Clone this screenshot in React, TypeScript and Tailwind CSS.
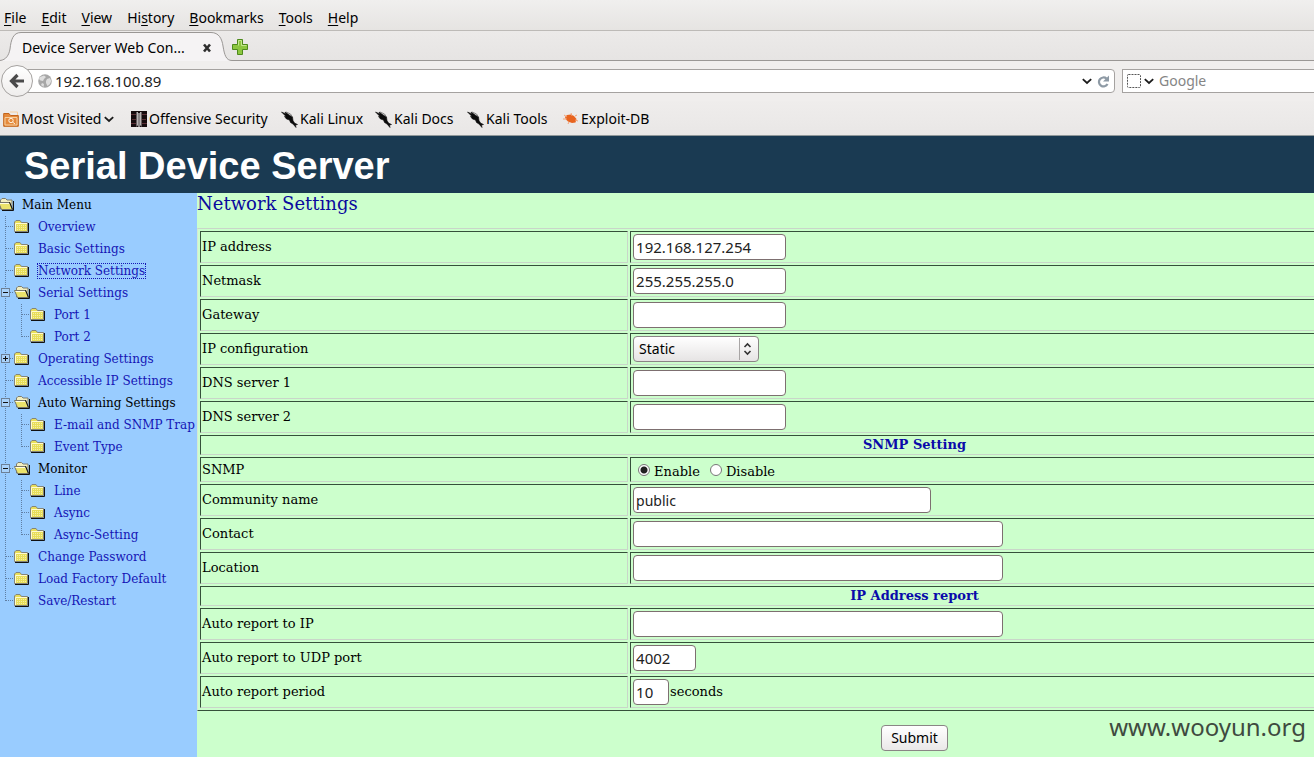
import type { ReactNode } from "react";

const ui = "font-['Noto_Sans',sans-serif]";

/* ---------- browser chrome ---------- */

const menus: [string, string, string][] = [
  ["", "F", "ile"],
  ["", "E", "dit"],
  ["", "V", "iew"],
  ["Hi", "s", "tory"],
  ["", "B", "ookmarks"],
  ["", "T", "ools"],
  ["", "H", "elp"],
];

function MenuBar() {
  return (
    <nav className="flex h-[30px] items-center gap-[15px] bg-gradient-to-b from-[#f0efee] to-[#e6e4e2] px-1 pt-[5px] text-sm leading-5">
      {menus.map(([a, b, c]) => (
        <button key={a + b + c} type="button">
          {a}
          <span className="underline underline-offset-2">{b}</span>
          {c}
        </button>
      ))}
    </nav>
  );
}

function TabStrip() {
  return (
    <div className="flex h-[31px] items-start border-t border-[#bdbab7] bg-gradient-to-b from-[#eceae9] to-[#e6e4e3]">
      <div className="relative h-[30px] w-[232px] shrink-0">
        <svg className="absolute inset-0" width="232" height="30" viewBox="0 0 232 30">
          <path d="M0 29.5C6 29 9 24 10 18C11 9 13 1.500 21 1.500H211C219 1.500 222 8 223 15C224.500 24 226 29.500 232 29.500V30H0Z" fill="#f5f3f4" />
          <path d="M0 29.5C6 29 9 24 10 18C11 9 13 1.500 21 1.500H211C219 1.500 222 8 223 15C224.500 24 226 29.500 232 29.500" fill="none" stroke="#9a9795" />
        </svg>
        <div className="relative flex h-full items-center justify-between pt-1 pr-5 pl-[22px] text-sm">
          <span className="whitespace-nowrap">Device Server Web Con...</span>
          <button type="button" aria-label="Close tab">
            <svg width="10" height="10" viewBox="0 0 10 10">
              <path d="M2 1.500L8 8.500M8 1.500L2 8.500" stroke="#2e2e2e" strokeWidth="2.600" />
            </svg>
          </button>
        </div>
      </div>
      <div className="flex h-[30px] flex-1 items-center border-b border-[#9a9795]">
        <button type="button" aria-label="New tab" className="pt-[2px]">
          <svg width="16" height="16" viewBox="0 0 16 16">
            <path d="M5.500 .5H10.500V5.500H15.500V10.500H10.500V15.500H5.500V10.500H.5V5.500H5.500Z" fill="#8cc63f" stroke="#4e8a1c" />
            <path d="M6.500 6.500V1.500H9.500V6.500H14.500" fill="none" stroke="#c3e68d" />
          </svg>
        </button>
      </div>
    </div>
  );
}

function Chevron() {
  return (
    <svg width="10" height="7" viewBox="0 0 10 7" className="shrink-0">
      <path d="M.8 1.200L5 5L9.200 1.200" fill="none" stroke="#1b1b1b" strokeWidth="1.800" />
    </svg>
  );
}

function NavBar() {
  return (
    <div className="flex h-10 items-center bg-[#f0eeed]">
      <button
        type="button"
        aria-label="Back"
        className="z-10 ml-[1px] flex size-8 shrink-0 items-center justify-center rounded-full border border-[#a5a2a0] bg-gradient-to-b from-white to-[#efedec]"
      >
        <svg width="16" height="16" viewBox="0 0 16 16">
          <path d="M8.500 2L2.500 8L8.500 14M3 8H15" fill="none" stroke="#4a4a4a" strokeWidth="3.200" />
        </svg>
      </button>
      <div className="-ml-2 flex h-6 w-[1090px] min-w-0 items-center rounded-r-sm border border-[#a5a2a0] bg-white pr-1 pl-3">
        <svg width="14" height="14" viewBox="0 0 14 14" className="shrink-0">
          <circle cx="7" cy="7" r="6.800" fill="#a7a7a7" />
          <path d="M2 3L6 1.500L8 3L6 5L5 7L2.500 6.500L1 5ZM9 5L12 4L13.300 7L12 10L9.500 12L8 9L8 7ZM4 9L6 10L5.500 13L3 11Z" fill="#dedede" />
        </svg>
        <input
          aria-label="Address"
          defaultValue="192.168.100.89"
          className="ml-[3px] min-w-0 flex-1 bg-transparent text-[15px] leading-5 text-[#222] outline-none"
        />
        <button type="button" aria-label="Show history">
          <Chevron />
        </button>
        <button type="button" aria-label="Reload" className="ml-[5px]">
          <svg width="13" height="13" viewBox="0 0 13 13">
            <path d="M9.500 3.600A4.500 4.500 0 1 0 10.500 9" fill="none" stroke="#8e9aa5" strokeWidth="2.200" />
            <path d="M12 .5V6.500H6Z" fill="#8e9aa5" />
          </svg>
        </button>
      </div>
      <div className="ml-[7px] flex h-6 min-w-[192px] flex-1 items-center border border-r-0 border-[#a5a2a0] bg-white pl-1">
        <svg width="14" height="14" viewBox="0 0 14 14" className="shrink-0">
          <rect x=".5" y=".5" width="13" height="13" rx="1" fill="none" stroke="#555" strokeDasharray="2 1" />
        </svg>
        <button type="button" aria-label="Choose search engine" className="ml-[3px]">
          <Chevron />
        </button>
        <input
          aria-label="Search"
          placeholder="Google"
          className="ml-[5px] w-full min-w-0 bg-transparent text-sm leading-5 outline-none placeholder:text-[#858585]"
        />
      </div>
    </div>
  );
}

function KaliIcon() {
  return (
    <svg width="17" height="17" viewBox="0 0 17 17" className="mr-[1px] shrink-0">
      <path d="M.5 1L5 3L4 1L9 4.500L11.500 6L12 9.500L13.500 12L16.500 13.500L14.500 14L15 16.500L12 13L9.500 11.500L8.500 9L5.500 8L3.500 5.500L5 5.500Z" fill="#0b0b0b" stroke="#0b0b0b" strokeWidth=".6" />
      <path d="M5 1L9.500 3L11.500 6" fill="none" stroke="#555" strokeWidth=".7" />
    </svg>
  );
}

function Bookmarks() {
  const item = "flex items-center gap-[1px] whitespace-nowrap";
  return (
    <nav className="flex h-[34px] items-center bg-gradient-to-b from-[#efedec] to-[#e9e7e6] pt-[2px] pl-[3px] text-sm leading-5">
      <button type="button" className={item + " w-[113px]"}>
        <svg width="16" height="16" viewBox="0 0 16 16" className="mr-[1px] shrink-0">
          <path d="M.7 2.500H6L7.500 4.500H15.300V15.300H.7Z" fill="#e58a3c" stroke="#c4641a" />
          <path d="M7 1H14.500V4M2 6.500H14V14H2Z" fill="none" stroke="#f6cf9f" />
          <circle cx="8" cy="9.500" r="2.200" fill="none" stroke="#fff3df" />
          <path d="M9.500 11L12 13" stroke="#fff3df" />
        </svg>
        <span className="mr-[2px]">Most Visited</span>
        <Chevron />
      </button>
      <a href="#offsec" className={item + " ml-[15px] w-[140px]"}>
        <svg width="16" height="16" viewBox="0 0 16 16" className="mr-[1px] shrink-0">
          <path fill="#170c0e" d="M0 0H16V16H0Z" />
          <path stroke="#5b3036" d="M0 3.500H5M1 8.500H5M0 12.500H5M11 3.500H16M11 8.500H15M11 12.500H16" />
          <path fill="#b9b4b4" d="M5.500 1H7V14L5.500 16ZM9 1H10.500V16L9 14Z" />
          <path fill="#fff" d="M7.500 2H8.500V16H7.500Z" />
        </svg>
        Offensive Security
      </a>
      <a href="#linux" className={item + " ml-[10px] w-[84px]"}>
        <KaliIcon />
        Kali Linux
      </a>
      <a href="#docs" className={item + " ml-[10px] w-[82px]"}>
        <KaliIcon />
        Kali Docs
      </a>
      <a href="#tools" className={item + " ml-[10px] w-[86px]"}>
        <KaliIcon />
        Kali Tools
      </a>
      <a href="#edb" className={item + " ml-[10px]"}>
        <svg width="16" height="16" viewBox="0 0 16 16" className="mr-[1px] shrink-0">
          <path d="M2 6L4 4L8 3.500L11 5L13.500 8L12.500 11.500L9 12L5 10.500L3 8.500Z" fill="#e8641f" />
          <path d="M1 4L4 6M0 8L4 8M8 2L9 5M12 5L14 4M12 9L15 10M6 11L5 13" stroke="#f2a276" />
        </svg>
        Exploit-DB
      </a>
    </nav>
  );
}

/* ---------- navigation tree ---------- */

type Mark = "" | "minus" | "plus";
type Node = { text: string; depth: 0 | 1 | 2; open?: boolean; link?: boolean; mark?: Mark; last?: boolean; focus?: boolean };

const tree: Node[] = [
  { text: "Main Menu", depth: 0, open: true },
  { text: "Overview", depth: 1, link: true },
  { text: "Basic Settings", depth: 1, link: true },
  { text: "Network Settings", depth: 1, link: true, focus: true },
  { text: "Serial Settings", depth: 1, link: true, open: true, mark: "minus" },
  { text: "Port 1", depth: 2, link: true },
  { text: "Port 2", depth: 2, link: true, last: true },
  { text: "Operating Settings", depth: 1, link: true, mark: "plus" },
  { text: "Accessible IP Settings", depth: 1, link: true },
  { text: "Auto Warning Settings", depth: 1, open: true, mark: "minus" },
  { text: "E-mail and SNMP Trap", depth: 2, link: true },
  { text: "Event Type", depth: 2, link: true, last: true },
  { text: "Monitor", depth: 1, open: true, mark: "minus" },
  { text: "Line", depth: 2, link: true },
  { text: "Async", depth: 2, link: true },
  { text: "Async-Setting", depth: 2, link: true, last: true },
  { text: "Change Password", depth: 1, link: true },
  { text: "Load Factory Default", depth: 1, link: true },
  { text: "Save/Restart", depth: 1, link: true, last: true },
];

function Branch({ edge, arm, last, mark }: { edge?: boolean; arm?: boolean; last?: boolean; mark?: Mark }) {
  return (
    <svg width={edge ? 14 : 16} height="22" viewBox={edge ? "2 0 14 22" : "0 0 16 22"} className="shrink-0">
      <path d={last ? "M7.500 0V11" : "M7.500 0V22"} stroke="#5f7ea3" strokeDasharray="1 1" />
      {arm && <path d="M8 10.500H16" stroke="#5f7ea3" strokeDasharray="1 1" />}
      {mark && (
        <>
          <rect x="3.500" y="6.500" width="8" height="8" fill="#a9d2fb" stroke="#6d8096" />
          <path d={mark === "plus" ? "M5 10.500H10M7.500 8V13" : "M5 10.500H10"} stroke="#111" />
        </>
      )}
    </svg>
  );
}

function Folder({ open, edge }: { open?: boolean; edge?: boolean }) {
  return (
    <svg width={edge ? 14 : 16} height="22" viewBox={edge ? "2 0 14 22" : "0 0 16 22"} className="shrink-0">
      {open ? (
        <>
          <path d="M2.500 15V6L4 4.500H7.500L9 6H14V15Z" fill="#f3efc0" stroke="#7d7d70" />
          <path d="M.5 8.500H11.500L14.500 15.500H3.500Z" fill="#ebe36c" stroke="#77776a" />
          <path d="M1.500 9.500H11" stroke="#fffde0" />
          <path d="M11.500 8L14.500 15.500M15.500 7V16.500H4" fill="none" stroke="#111" />
        </>
      ) : (
        <>
          <path d="M.5 15.500V6L2 4.500H6L7.500 6.500H13.500V15.500Z" fill="#e8de5a" stroke="#85857a" />
          <path d="M1.500 15V7.500H13" fill="none" stroke="#fffbd0" />
          <path d="M3 9.500H13M3 11.500H13M3 13.500H13" stroke="#f5f0a8" strokeDasharray="1 1" />
          <path d="M14.500 7V16.500H1" fill="none" stroke="#111" />
        </>
      )}
    </svg>
  );
}

function Sidebar() {
  return (
    <aside className="w-[197px] shrink-0 bg-[#99ccff] pt-[1px] font-['DejaVu_Serif',serif] text-xs">
      <ul>
        {tree.map((n) => (
          <li key={n.text} className="flex h-[22px] items-center whitespace-nowrap">
            {n.depth > 0 && <Branch edge arm={n.depth === 1} mark={n.mark} last={n.depth === 1 && n.last} />}
            {n.depth > 1 && <Branch arm last={n.last} />}
            <Folder open={n.open} edge={n.depth === 0} />
            {n.link ? (
              <a href="#menu" className={n.focus ? "ml-2 leading-[14px] text-[#1515b5] outline-1 outline-dotted outline-[#1515b5]" : "ml-2 leading-[14px] text-[#1515b5]"}>
                {n.text}
              </a>
            ) : (
              <span className="ml-2 leading-[14px]">{n.text}</span>
            )}
          </li>
        ))}
      </ul>
    </aside>
  );
}

/* ---------- settings form ---------- */

const cell = "border border-t-[#35503a] border-l-[#35503a] border-r-[#c9d6c9] border-b-[#c9d6c9] px-[1px] py-0";
const box = "h-[26px] rounded-[4px] border border-[#7d6f70] bg-white px-[2px] font-['Noto_Sans',sans-serif] leading-5 text-[#222] outline-none";

function Row({ label, id, children, short }: { label: string; id?: string; children: ReactNode; short?: boolean }) {
  return (
    <tr>
      <td className={cell + (short ? " h-[25px]" : " h-8") + " w-[30%]"}>
        <label htmlFor={id}>{label}</label>
      </td>
      <td className={cell}>
        <div className="flex items-center pl-[1px]">{children}</div>
      </td>
    </tr>
  );
}

function Field({ id, width, value = "", text = "text-[15px]" }: { id: string; width: string; value?: string; text?: string }) {
  return <input id={id} type="text" defaultValue={value} className={box + " " + width + " " + text} />;
}

function Section({ children }: { children: ReactNode }) {
  return (
    <tr>
      <th colSpan={2} className={cell + " h-5 text-center leading-4 font-bold text-[#0a0aaa]"}>
        {children}
      </th>
    </tr>
  );
}

function Radio({ label, checked }: { label: string; checked?: boolean }) {
  return (
    <label className="flex items-center gap-1">
      <input
        type="radio"
        name="snmp"
        defaultChecked={checked}
        className="size-3 appearance-none rounded-full border border-[#777] bg-white checked:bg-[radial-gradient(circle,#222_0_3px,#fff_4px)]"
      />
      <span className="pt-1">{label}</span>
    </label>
  );
}

function Settings() {
  return (
    <main className="min-w-0 flex-1 overflow-hidden bg-[#ccffcc] font-['DejaVu_Serif',serif] text-[13px] leading-4">
      <form className="w-full min-w-[1435px]" onSubmit={(e) => e.preventDefault()}>
        <h2 className="mb-[14px] text-lg leading-[21px] text-[#0a0a9e]">Network Settings</h2>
        <table className="w-full border-separate border-spacing-[2px] border border-t-[#c9d6c9] border-r-[#35503a] border-b-[#35503a] border-l-[#d5e8d5]">
          <tbody>
            <Row label="IP address" id="ip"><Field id="ip" width="w-[153px]" value="192.168.127.254" /></Row>
            <Row label="Netmask" id="mask"><Field id="mask" width="w-[153px]" value="255.255.255.0" /></Row>
            <Row label="Gateway" id="gw"><Field id="gw" width="w-[153px]" /></Row>
            <Row label="IP configuration" id="conf">
              <div className="relative">
                <select
                  id="conf"
                  className="block h-[26px] w-[126px] appearance-none rounded-[4px] border border-[#8a8585] bg-gradient-to-b from-white to-[#e6e4e4] pl-[5px] font-['Noto_Sans',sans-serif] text-sm outline-none"
                >
                  <option>Static</option>
                  <option>DHCP</option>
                </select>
                <svg className="pointer-events-none absolute top-[2px] right-[2px]" width="18" height="22" viewBox="0 0 18 22">
                  <path d="M.5 0V22" stroke="#a8a5a5" />
                  <path d="M5.500 9L8.500 6L11.500 9M5.500 13L8.500 16L11.500 13" fill="none" stroke="#333" strokeWidth="1.600" />
                </svg>
              </div>
            </Row>
            <Row label="DNS server 1" id="dns1"><Field id="dns1" width="w-[153px]" /></Row>
            <Row label="DNS server 2" id="dns2"><Field id="dns2" width="w-[153px]" /></Row>
            <Section>SNMP Setting</Section>
            <Row label="SNMP" short>
              <div className="flex gap-[10px] pl-[5px]">
                <Radio label="Enable" checked />
                <Radio label="Disable" />
              </div>
            </Row>
            <Row label="Community name" id="comm"><Field id="comm" width="w-[298px]" value="public" text="text-sm" /></Row>
            <Row label="Contact" id="contact"><Field id="contact" width="w-[370px]" /></Row>
            <Row label="Location" id="loc"><Field id="loc" width="w-[370px]" /></Row>
            <Section>IP Address report</Section>
            <Row label="Auto report to IP" id="rip"><Field id="rip" width="w-[370px]" /></Row>
            <Row label="Auto report to UDP port" id="udp"><Field id="udp" width="w-[63px]" value="4002" /></Row>
            <Row label="Auto report period" id="period">
              <Field id="period" width="w-9" value="10" />
              <span className="ml-[1px]">seconds</span>
            </Row>
          </tbody>
        </table>
        <div className="flex justify-center pt-[14px]">
          <button
            type="submit"
            className="h-[26px] rounded-[4px] border border-[#8a8585] bg-gradient-to-b from-white to-[#eae8e8] px-[9px] font-['Noto_Sans',sans-serif] text-sm"
          >
            Submit
          </button>
        </div>
      </form>
    </main>
  );
}

export default function App() {
  return (
    <div className="relative flex min-h-screen flex-col overflow-hidden text-black">
      <header className={ui}>
        <MenuBar />
        <TabStrip />
        <NavBar />
        <Bookmarks />
      </header>
      <div className="flex h-[58px] items-center border-t border-[#8f9799] bg-[#1a3a52] pt-[2px] pl-6">
        <h1 className="font-['Liberation_Sans',Arial,sans-serif] text-[38px] leading-10 font-bold whitespace-nowrap text-white">Serial Device Server</h1>
      </div>
      <div className="flex flex-1">
        <Sidebar />
        <Settings />
      </div>
      <div className="absolute right-2 bottom-3 font-['Noto_Sans',sans-serif] text-2xl leading-9 text-[#3f4a3f]">www.wooyun.org</div>
    </div>
  );
}
